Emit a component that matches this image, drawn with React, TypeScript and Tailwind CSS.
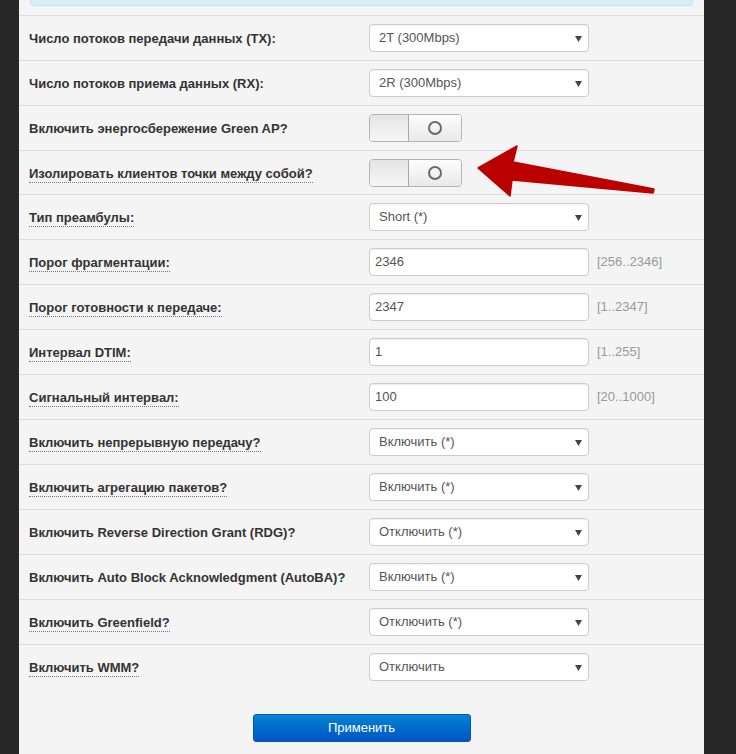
import React from "react";

type Row =
  | { label: string; dotted?: boolean; kind: "select"; value: string }
  | { label: string; dotted?: boolean; kind: "toggle" }
  | { label: string; dotted?: boolean; kind: "input"; value: string; hint: string };

const rows: Row[] = [
  { label: "Число потоков передачи данных (TX):", kind: "select", value: "2T (300Mbps)" },
  { label: "Число потоков приема данных (RX):", kind: "select", value: "2R (300Mbps)" },
  { label: "Включить энергосбережение Green AP?", kind: "toggle" },
  { label: "Изолировать клиентов точки между собой?", dotted: true, kind: "toggle" },
  { label: "Тип преамбулы:", dotted: true, kind: "select", value: "Short (*)" },
  { label: "Порог фрагментации:", dotted: true, kind: "input", value: "2346", hint: "[256..2346]" },
  { label: "Порог готовности к передаче:", dotted: true, kind: "input", value: "2347", hint: "[1..2347]" },
  { label: "Интервал DTIM:", dotted: true, kind: "input", value: "1", hint: "[1..255]" },
  { label: "Сигнальный интервал:", dotted: true, kind: "input", value: "100", hint: "[20..1000]" },
  { label: "Включить непрерывную передачу?", dotted: true, kind: "select", value: "Включить (*)" },
  { label: "Включить агрегацию пакетов?", dotted: true, kind: "select", value: "Включить (*)" },
  { label: "Включить Reverse Direction Grant (RDG)?", kind: "select", value: "Отключить (*)" },
  { label: "Включить Auto Block Acknowledgment (AutoBA)?", kind: "select", value: "Включить (*)" },
  { label: "Включить Greenfield?", dotted: true, kind: "select", value: "Отключить (*)" },
  { label: "Включить WMM?", dotted: true, kind: "select", value: "Отключить" },
];

function SelectBox({ value }: { value: string }) {
  return (
    <div className="flex h-[28px] w-[220px] items-center justify-between rounded-[4px] border border-[#cccccc] bg-white pl-[9px] pr-[6px] shadow-[inset_0_1px_1px_rgba(0,0,0,0.05)]">
      <span className="text-[13px] text-[#555555]">{value}</span>
      <svg width="7" height="7" viewBox="0 0 7 7">
        <path d="M0 1 H7 L3.5 7 Z" fill="#444444" />
      </svg>
    </div>
  );
}

function InputBox({ value, hint }: { value: string; hint: string }) {
  return (
    <div className="flex items-center">
      <div className="flex h-[28px] w-[220px] items-center rounded-[4px] border border-[#cccccc] bg-white pl-[5px] shadow-[inset_0_1px_1px_rgba(0,0,0,0.07)]">
        <span className="text-[13px] text-[#555555]">{value}</span>
      </div>
      <span className="ml-[8px] text-[13px] text-[#999999]">{hint}</span>
    </div>
  );
}

function Toggle() {
  return (
    <div className="flex h-[28px] w-[93px] overflow-hidden rounded-[4px] border border-[#b4b4b4]">
      <div className="h-full w-[39px] border-r border-[#a8a8a8] bg-gradient-to-b from-[#e4e4e4] to-[#f6f6f6] shadow-[1px_0_1px_rgba(0,0,0,0.12)]" />
      <div className="flex flex-1 items-center justify-center bg-gradient-to-b from-[#fdfdfd] to-[#e9e9e9]">
        <span className="block h-[14px] w-[14px] rounded-full border-2 border-[#6a6a6a]" />
      </div>
    </div>
  );
}

export default function App() {
  return (
    <div
      className="relative flex h-[754px] w-[736px] overflow-hidden bg-[#272727]"
      style={{ fontFamily: '"Liberation Sans", Arial, sans-serif' }}
    >
      <div className="ml-[19px] flex h-full w-[685px] flex-col bg-[#f4f4f4]">
        <div className="mx-[11px] h-[6px] rounded-b-[4px] border-x border-b border-[#bce8f1] bg-[#d9edf7]" />
        <div className="mt-[9px] flex flex-col">
          {rows.map((r, i) => (
            <div
              key={i}
              className={
                "flex items-center border-t border-[#dddddd] pl-[10px] " +
                (i === 3 ? "h-[44px]" : "h-[45px]")
              }
            >
              <div className="w-[340px]">
                <span
                  className={
                    "text-[13px] font-bold text-[#333333] " +
                    (r.dotted ? "border-b border-dotted border-[#777777] pb-[1px]" : "")
                  }
                >
                  {r.label}
                </span>
              </div>
              {r.kind === "select" && <SelectBox value={r.value} />}
              {r.kind === "toggle" && <Toggle />}
              {r.kind === "input" && <InputBox value={r.value} hint={r.hint} />}
            </div>
          ))}
        </div>
        <div className="mt-[25px] flex justify-center">
          <button className="h-[28px] w-[218px] rounded-[3px] border border-[#0057b8] bg-gradient-to-b from-[#0a82d2] to-[#0055c6] text-[13px] text-white">
            Применить
          </button>
        </div>
      </div>
      <svg
        className="pointer-events-none absolute left-0 top-0"
        width="736"
        height="754"
        viewBox="0 0 736 754"
      >
        <path
          d="M478 168 L517 146 L513 162 L654 189 L653 193 L512 180 L510 196 Z"
          fill="#bb0000"
          stroke="#bb0000"
          strokeWidth="1.5"
          strokeLinejoin="round"
        />
      </svg>
    </div>
  );
}
